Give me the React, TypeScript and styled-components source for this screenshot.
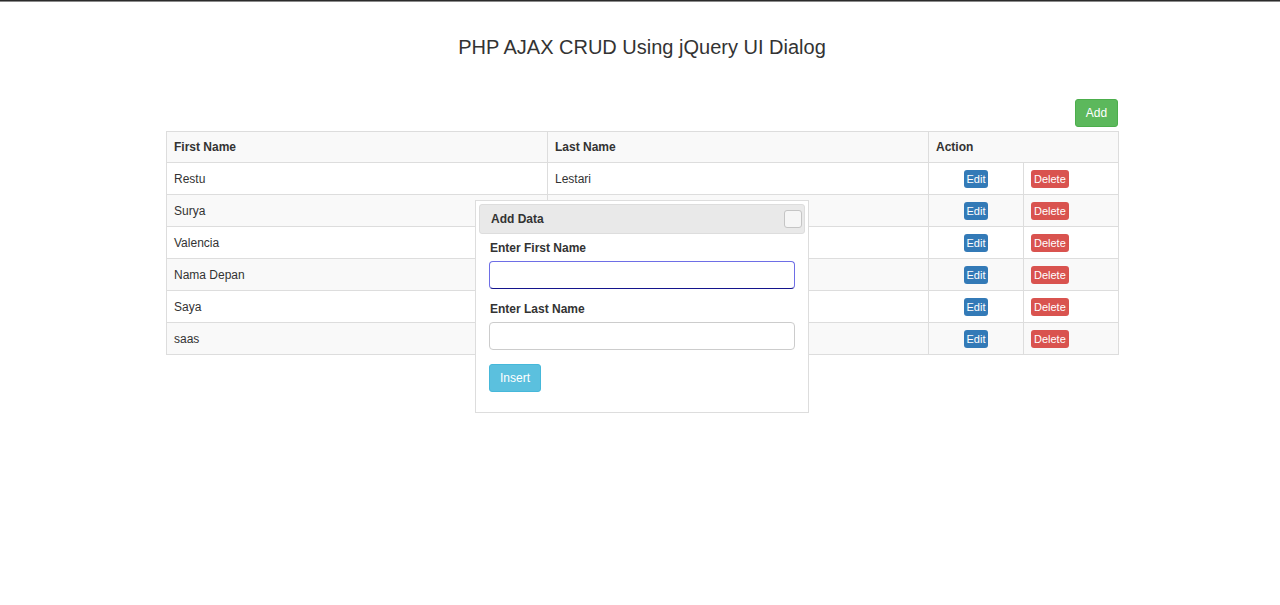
import React from 'react';
import styled, { createGlobalStyle } from 'styled-components';

const GlobalStyle = createGlobalStyle`
  body {
    margin: 0;
    background: #fff;
    font-family: 'Liberation Sans', Arial, Helvetica, sans-serif;
    font-size: 12px;
    color: #333;
  }
`;

const rows = [
  { first: 'Restu', last: 'Lestari' },
  { first: 'Surya', last: '' },
  { first: 'Valencia', last: '' },
  { first: 'Nama Depan', last: '' },
  { first: 'Saya', last: '' },
  { first: 'saas', last: '' },
];

export default function App() {
  return (
    <Page>
      <GlobalStyle />
      <TopLine />
      <Container>
        <Title>PHP AJAX CRUD Using jQuery UI Dialog</Title>
        <Toolbar>
          <AddButton>Add</AddButton>
        </Toolbar>
        <Table>
          <colgroup>
            <col style={{ width: 381 }} />
            <col style={{ width: 381 }} />
            <col style={{ width: 95 }} />
            <col style={{ width: 95 }} />
          </colgroup>
          <thead>
            <tr>
              <Th>First Name</Th>
              <Th>Last Name</Th>
              <Th colSpan={2}>Action</Th>
            </tr>
          </thead>
          <tbody>
            {rows.map((row, i) => (
              <Tr key={row.first} striped={i % 2 === 1}>
                <Td>{row.first}</Td>
                <Td>{row.last}</Td>
                <Td align="center">
                  <SmallButton tone="#337ab7">Edit</SmallButton>
                </Td>
                <Td>
                  <SmallButton tone="#d9534f">Delete</SmallButton>
                </Td>
              </Tr>
            ))}
          </tbody>
        </Table>
      </Container>

      <Dialog>
        <DialogHeader>
          <DialogTitle>Add Data</DialogTitle>
          <CloseButton aria-label="close" />
        </DialogHeader>
        <DialogBody>
          <FormGroup>
            <Label>Enter First Name</Label>
            <Input focused />
          </FormGroup>
          <FormGroup>
            <Label>Enter Last Name</Label>
            <Input />
          </FormGroup>
          <InsertButton>Insert</InsertButton>
        </DialogBody>
      </Dialog>
    </Page>
  );
}

const Page = styled.div`
  position: relative;
  min-height: 605px;
`;

const TopLine = styled.div`
  height: 1px;
  background: #2b2b2b;
  border-bottom: 1px solid #8a8a8a;
`;

const Container = styled.div`
  width: 952px;
  margin: 0 auto;
  padding-left: 4px;
`;

const Title = styled.h3`
  margin: 0;
  padding-top: 33px;
  font-size: 20px;
  font-weight: 400;
  line-height: 24px;
  text-align: center;
  color: #333;
`;

const Toolbar = styled.div`
  display: flex;
  justify-content: flex-end;
  margin-top: 40px;
  margin-bottom: 4px;
`;

const AddButton = styled.button`
  width: 43px;
  height: 28px;
  padding: 0;
  border: 1px solid #4cae4c;
  border-radius: 3px;
  background: #5cb85c;
  color: #fff;
  font-family: inherit;
  font-size: 12px;
`;

const Table = styled.table`
  width: 952px;
  border-collapse: collapse;
  table-layout: fixed;
  border: 1px solid #ddd;
`;

const Th = styled.th`
  height: 30px;
  padding: 0 7px;
  text-align: left;
  font-weight: 700;
  font-size: 12px;
  background: #f9f9f9;
  border: 1px solid #ddd;
`;

const Tr = styled.tr<{ striped: boolean }>`
  background: ${({ striped }) => (striped ? '#f9f9f9' : '#fff')};
`;

const Td = styled.td<{ align?: string }>`
  height: 31px;
  padding: 0 7px;
  border: 1px solid #ddd;
  text-align: ${({ align }) => align || 'left'};
  vertical-align: middle;
  font-size: 12px;
`;

const SmallButton = styled.button<{ tone: string }>`
  height: 18px;
  padding: 0 3px;
  border: none;
  border-radius: 3px;
  background: ${({ tone }) => tone};
  color: #fff;
  font-family: inherit;
  font-size: 11px;
  line-height: 18px;
  vertical-align: middle;
`;

const Dialog = styled.div`
  position: absolute;
  left: 475px;
  top: 200px;
  width: 334px;
  height: 213px;
  box-sizing: border-box;
  padding: 3px;
  border: 1px solid #dddddd;
  background: #fff;
`;

const DialogHeader = styled.div`
  display: flex;
  align-items: center;
  justify-content: space-between;
  height: 30px;
  box-sizing: border-box;
  padding: 0 2px 0 11px;
  border: 1px solid #dddddd;
  border-radius: 3px;
  background: #e9e9e9;
`;

const DialogTitle = styled.span`
  font-weight: 700;
  font-size: 12px;
  color: #333;
`;

const CloseButton = styled.button`
  width: 18px;
  height: 18px;
  padding: 0;
  border: 1px solid #c5c5c5;
  border-radius: 3px;
  background: #f6f6f6;
`;

const DialogBody = styled.div`
  padding: 6px 10px 0 10px;
`;

const FormGroup = styled.div`
  display: flex;
  flex-direction: column;
  margin-bottom: 12px;
  &:last-of-type {
    margin-bottom: 14px;
  }
`;

const Label = styled.label`
  font-weight: 700;
  font-size: 12px;
  line-height: 17px;
  margin-bottom: 4px;
  padding-left: 1px;
  color: #333;
`;

const Input = styled.div<{ focused?: boolean }>`
  width: 306px;
  height: 28px;
  box-sizing: border-box;
  border: 1px solid ${({ focused }) => (focused ? '#6e6ee6' : '#cccccc')};
  border-bottom-color: ${({ focused }) => (focused ? '#14148c' : '#cccccc')};
  border-radius: 4px;
  background: #fff;
`;

const InsertButton = styled.button`
  width: 52px;
  height: 28px;
  padding: 0;
  border: 1px solid #46b8da;
  border-radius: 3px;
  background: #5bc0de;
  color: #fff;
  font-family: inherit;
  font-size: 12px;
`;
